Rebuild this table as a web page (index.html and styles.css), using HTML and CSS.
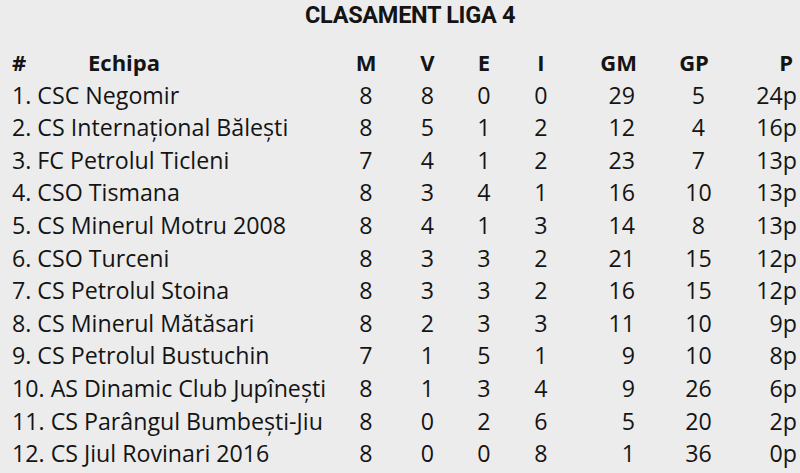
FILE: index.html
```html
<!DOCTYPE html>
<html lang="ro">
<head>
<meta charset="utf-8">
<title>Clasament Liga 4</title>
<link rel="stylesheet" href="styles.css">
</head>
<body>
<div class="page">
  <h1 class="title">CLASAMENT LIGA 4</h1>
  <div class="table">
    <div class="row head">
      <div class="name"><span class="hash">#</span><span class="team-h">Echipa</span></div>
      <div class="c">M</div>
      <div class="c">V</div>
      <div class="c">E</div>
      <div class="c">I</div>
      <div class="gm gm-h">GM</div>
      <div class="gp gp-h">GP</div>
      <div class="p p-h">P</div>
    </div>
    <div class="row"><div class="name">1. CSC Negomir</div><div class="c">8</div><div class="c">8</div><div class="c">0</div><div class="c">0</div><div class="gm">29</div><div class="gp">5</div><div class="p">24p</div></div>
    <div class="row"><div class="name">2. CS Internațional Bălești</div><div class="c">8</div><div class="c">5</div><div class="c">1</div><div class="c">2</div><div class="gm">12</div><div class="gp">4</div><div class="p">16p</div></div>
    <div class="row"><div class="name">3. FC Petrolul Ticleni</div><div class="c">7</div><div class="c">4</div><div class="c">1</div><div class="c">2</div><div class="gm">23</div><div class="gp">7</div><div class="p">13p</div></div>
    <div class="row"><div class="name">4. CSO Tismana</div><div class="c">8</div><div class="c">3</div><div class="c">4</div><div class="c">1</div><div class="gm">16</div><div class="gp">10</div><div class="p">13p</div></div>
    <div class="row"><div class="name">5. CS Minerul Motru 2008</div><div class="c">8</div><div class="c">4</div><div class="c">1</div><div class="c">3</div><div class="gm">14</div><div class="gp">8</div><div class="p">13p</div></div>
    <div class="row"><div class="name">6. CSO Turceni</div><div class="c">8</div><div class="c">3</div><div class="c">3</div><div class="c">2</div><div class="gm">21</div><div class="gp">15</div><div class="p">12p</div></div>
    <div class="row"><div class="name">7. CS Petrolul Stoina</div><div class="c">8</div><div class="c">3</div><div class="c">3</div><div class="c">2</div><div class="gm">16</div><div class="gp">15</div><div class="p">12p</div></div>
    <div class="row"><div class="name">8. CS Minerul Mătăsari</div><div class="c">8</div><div class="c">2</div><div class="c">3</div><div class="c">3</div><div class="gm">11</div><div class="gp">10</div><div class="p">9p</div></div>
    <div class="row"><div class="name">9. CS Petrolul Bustuchin</div><div class="c">7</div><div class="c">1</div><div class="c">5</div><div class="c">1</div><div class="gm">9</div><div class="gp">10</div><div class="p">8p</div></div>
    <div class="row"><div class="name">10. AS Dinamic Club Jupînești</div><div class="c">8</div><div class="c">1</div><div class="c">3</div><div class="c">4</div><div class="gm">9</div><div class="gp">26</div><div class="p">6p</div></div>
    <div class="row"><div class="name">11. CS Parângul Bumbești-Jiu</div><div class="c">8</div><div class="c">0</div><div class="c">2</div><div class="c">6</div><div class="gm">5</div><div class="gp">20</div><div class="p">2p</div></div>
    <div class="row"><div class="name">12. CS Jiul Rovinari 2016</div><div class="c">8</div><div class="c">0</div><div class="c">0</div><div class="c">8</div><div class="gm">1</div><div class="gp">36</div><div class="p">0p</div></div>
  </div>
</div>
</body>
</html>
```
FILE: styles.css
```css
html, body {
  margin: 0;
  padding: 0;
  background: #ececec;
}
.page {
  padding: 1px 0 0 12px;
  color: #141414;
  font-family: "Open Sans", "Noto Sans", sans-serif;
}
.title {
  margin: 0 0 17px 0;
  padding-left: 293px;
  height: 28px;
  line-height: 28px;
  font-family: Roboto, "Liberation Sans", sans-serif;
  font-weight: bold;
  font-size: 23.5px;
  letter-spacing: -0.3px;
}
.row {
  display: grid;
  grid-template-columns: 324px 60px 63px 50px 64px 62px 100px 62px;
  height: 32.6px;
  line-height: 32.6px;
  font-size: 23.2px;
  white-space: nowrap;
}
.head {
  font-weight: bold;
  font-size: 22px;
}
.hash {
  display: inline-block;
  width: 76px;
}
.c { text-align: center; }
.gm { text-align: right; }
.gp { text-align: center; padding-left: 27px; }
.p { text-align: right; }
.gm-h { margin-right: -2px; }
.gp-h { padding-left: 18px; }
.p-h { padding-right: 4px; }
```
